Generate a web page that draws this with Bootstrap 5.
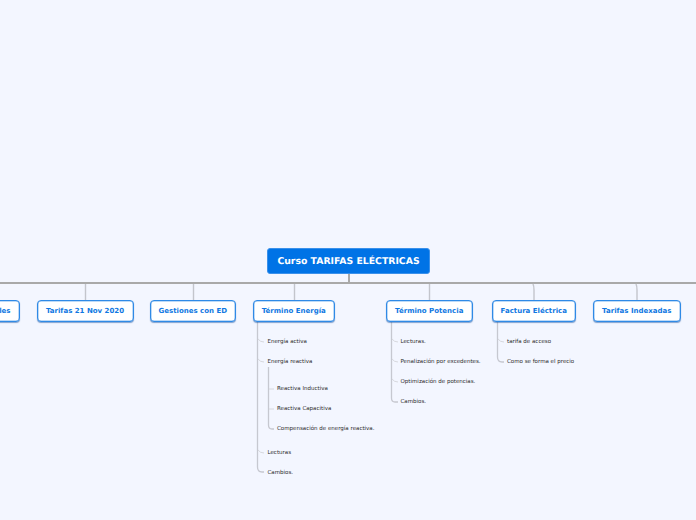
<!DOCTYPE html>
<html lang="es">
<head>
<meta charset="utf-8">
<title>Curso TARIFAS ELÉCTRICAS</title>
<link href="https://cdn.jsdelivr.net/npm/bootstrap@5.3.0/dist/css/bootstrap.min.css" rel="stylesheet">
<style>
html, body { height: 100%; }
body { background: #f3f6ff; font-family: "DejaVu Sans", Verdana, sans-serif; overflow: hidden; text-rendering: geometricPrecision; }
.map-canvas { position: relative; width: 696px; height: 520px; overflow: hidden; }
.map-lines { position: absolute; left: 0; top: 0; }
.map-root, .map-topic, .map-leaf { position: absolute; white-space: nowrap; }
.map-root { left: 267px; top: 248px; width: 163px; height: 26px; padding-top: 1px; background: #0073e6; color: #fff; border: 1px solid #3a90ea; border-radius: 3px; font-size: 9.3px; font-weight: 700; }
.map-topic { top: 300px; height: 22px; background: #fff; color: #0f78e2; border: 1px solid #2f8ae6; border-radius: 4px; box-shadow: inset 0 0 0 .5px #7db5ef, 0 1px 1px rgba(20,80,160,.5); font-size: 7px; font-weight: 700; }
.map-leaf { font-size: 5.5px; line-height: 8px; color: #2b2b2b; }
</style>
</head>
<body>
<div class="map-canvas">
<svg class="map-lines" width="696" height="520" fill="none">
  <path d="M349 274V283" stroke="#a9a9a9" stroke-width="2"/>
  <path d="M0 283H696" stroke="#a9a9a9" stroke-width="1.8"/>
  <g stroke="#c3c5cc" stroke-width="1.4">
    <path d="M85.500 284V300M193.500 284V300M294.500 284V300M429.500 284V300M533 284C534 286 534 287 534 290V300M636 284C637 286 637 287 637 290V300"/>
  </g>
  <g stroke="#c6c8d0" stroke-width="1.3">
    <path d="M257.500 322V467Q257.500 472 262 472H264"/>
    <path d="M268.500 367V425Q268.500 429 272 429H274"/>
    <path d="M391.500 322V398Q391.500 402 395 402H398"/>
    <path d="M497.500 322V357Q497.500 362 502 362H504"/>
  </g>
  <g stroke="#d6d8de" stroke-width="1">
    <path d="M258 339Q260 342 264 342M258 359Q260 362 264 362M258 450Q260 453 264 453"/>
    <path d="M269 389H274M269 409H274"/>
    <path d="M392 339Q394 342 398 342M392 359Q394 362 398 362M392 379Q394 382 398 382"/>
    <path d="M498 339Q500 342 504 342"/>
  </g>
</svg>

<div class="map-root d-flex align-items-center justify-content-center">Curso TARIFAS ELÉCTRICAS</div>

<div class="map-topic d-flex align-items-center justify-content-end pe-2" style="left:-60px;width:79.500px">les</div>
<div class="map-topic d-flex align-items-center justify-content-center" style="left:36.500px;width:97px">Tarifas 21 Nov 2020</div>
<div class="map-topic d-flex align-items-center justify-content-center" style="left:150px;width:85.500px">Gestiones con ED</div>
<div class="map-topic d-flex align-items-center justify-content-center" style="left:252.500px;width:82.500px">Término Energía</div>
<div class="map-topic d-flex align-items-center justify-content-center" style="left:386px;width:86.500px">Término Potencia</div>
<div class="map-topic d-flex align-items-center justify-content-center" style="left:492px;width:83.500px">Factura Eléctrica</div>
<div class="map-topic d-flex align-items-center justify-content-center" style="left:592.500px;width:88.500px">Tarifas Indexadas</div>

<div class="map-leaf" style="left:267.500px;top:338px">Energía activa</div>
<div class="map-leaf" style="left:267.500px;top:358px">Energía reactiva</div>
<div class="map-leaf" style="left:277px;top:385px">Reactiva Inductiva</div>
<div class="map-leaf" style="left:277px;top:405px">Reactiva Capacitiva</div>
<div class="map-leaf" style="left:277px;top:425px">Compensación de energía reactiva.</div>
<div class="map-leaf" style="left:267.500px;top:449px">Lecturas</div>
<div class="map-leaf" style="left:267.500px;top:469px">Cambios.</div>

<div class="map-leaf" style="left:400.500px;top:338px">Lecturas.</div>
<div class="map-leaf" style="left:400.500px;top:358px">Penalización por excedentes.</div>
<div class="map-leaf" style="left:400.500px;top:378px">Optimización de potencias.</div>
<div class="map-leaf" style="left:400.500px;top:398px">Cambios.</div>

<div class="map-leaf" style="left:507px;top:338px">tarifa de acceso</div>
<div class="map-leaf" style="left:507px;top:358px">Como se forma el precio</div>
</div>
<script src="https://cdn.jsdelivr.net/npm/bootstrap@5.3.0/dist/js/bootstrap.bundle.min.js"></script>
</body>
</html>
